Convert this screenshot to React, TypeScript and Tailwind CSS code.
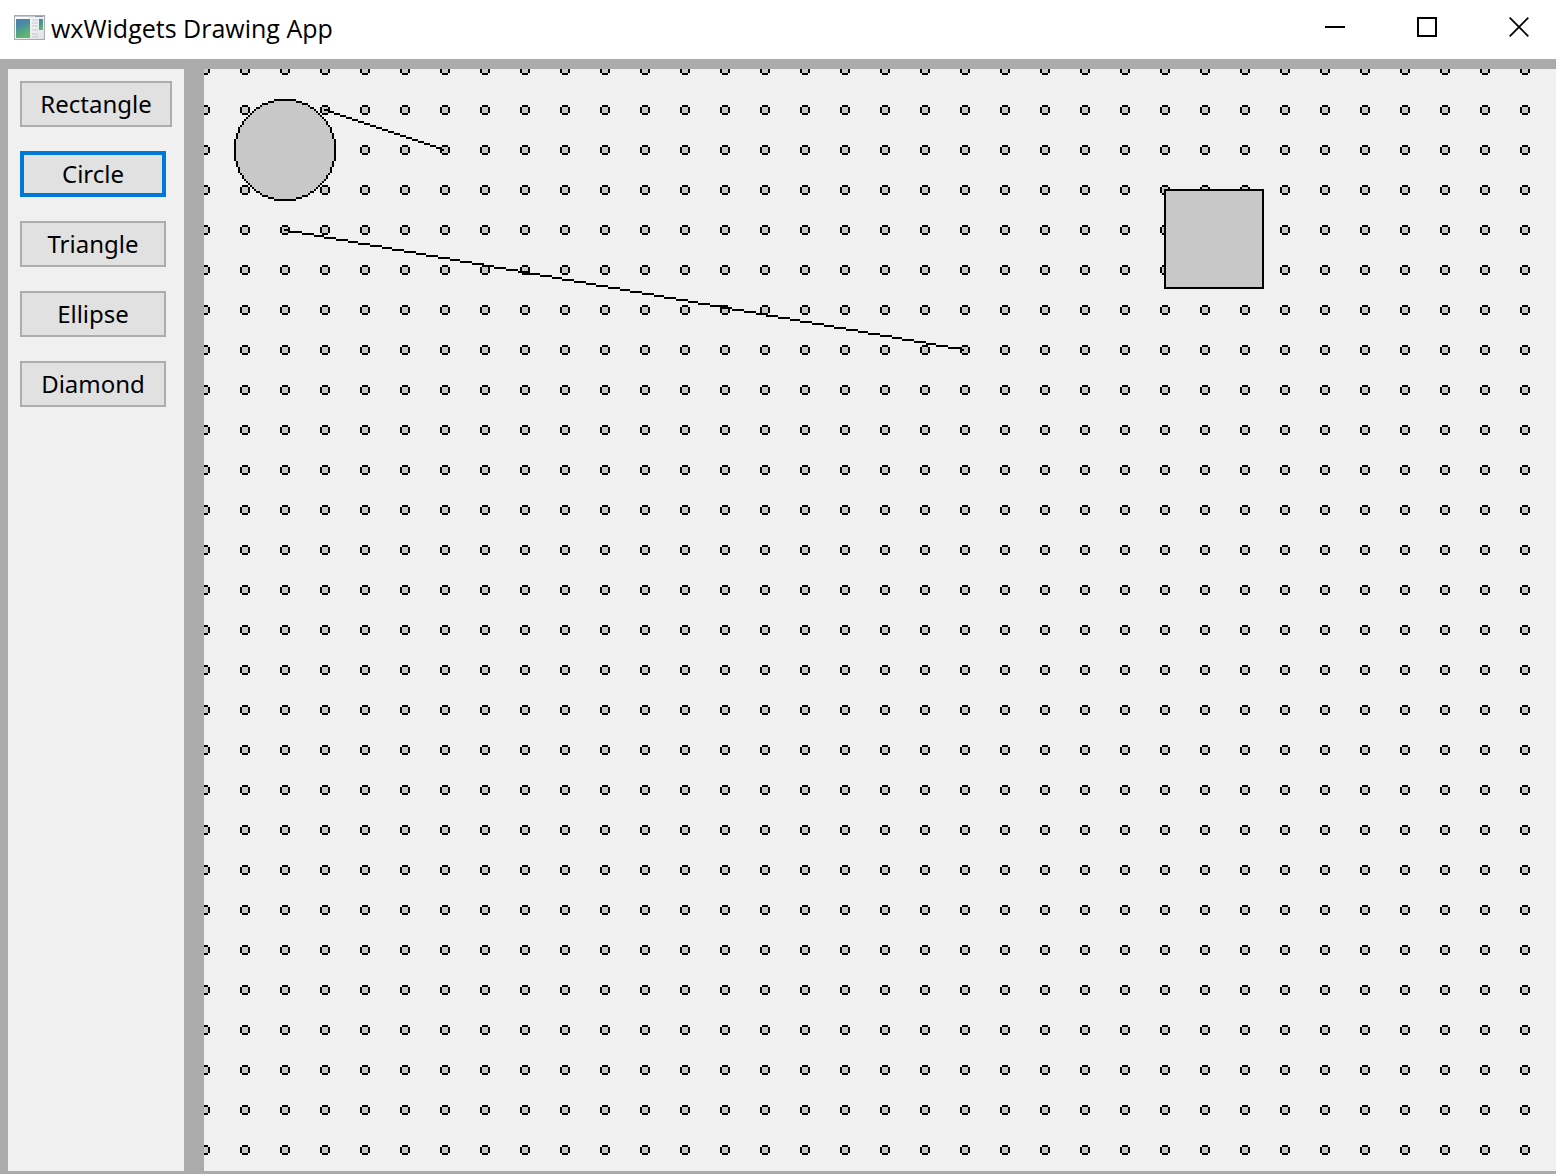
import { useState } from "react";

type Cell = [number, number];

const SHAPES = ["Rectangle", "Circle", "Triangle", "Ellipse", "Diamond"];
const WIDE_SHAPE = "Rectangle";

// One drawing unit is a cell of two screen pixels.
const toPath = (cells: Cell[]) => cells.map(([x, y]) => `M${x} ${y}h1v1h-1z`).join("");

function linePath(x0: number, y0: number, x1: number, y1: number) {
  const cells: Cell[] = [];
  for (let x = x0; x < x1; x++) {
    cells.push([x, Math.round(y0 + ((x - x0) * (y1 - y0)) / (x1 - x0))]);
  }
  return toPath(cells);
}

function circlePaths(cx: number, cy: number, r: number) {
  const outline: Cell[] = [];
  let fill = "";
  const reach = (r + 0.1) * (r + 0.1);
  for (let d = -r; d <= r; d++) {
    const e = Math.round(Math.sqrt(reach - d * d));
    fill += `M${cx - e} ${cy + d}h${2 * e + 1}v1h${-2 * e - 1}z`;
    if (e >= Math.abs(d)) {
      outline.push([cx + d, cy - e], [cx + d, cy + e], [cx - e, cy + d], [cx + e, cy + d]);
    }
  }
  return { fill, outline: toPath(outline) };
}

function AppIcon() {
  return (
    <svg className="h-[26px] w-8 shrink-0" viewBox="0 0 32 26" aria-hidden="true">
      <defs>
        <linearGradient id="pane" x1="0" y1="0" x2="0.4" y2="1">
          <stop offset="0" stopColor="#4b7fb0" />
          <stop offset="0.5" stopColor="#4a9796" />
          <stop offset="1" stopColor="#62b56c" />
        </linearGradient>
        <linearGradient id="frame" x1="0" y1="0" x2="1" y2="1">
          <stop offset="0" stopColor="#ffffff" />
          <stop offset="1" stopColor="#dfe2e4" />
        </linearGradient>
      </defs>
      <rect x="0.5" y="0.5" width="30" height="24" fill="url(#frame)" stroke="#a4acb1" />
      <path d="M1 1h29v1H1z" fill="#c3cbd1" />
      <path d="M21 1h8v1h-8z" fill="#8c979f" />
      <rect x="2" y="4" width="14" height="19" fill="url(#pane)" />
      <path d="M2 13q6-4 14-4V4H2z" fill="#4b7fb0" opacity="0.45" />
      <path
        d="M18 5h6M18 8h6M18 11h6M18 15h6M18 19h6M18 22h6"
        stroke="#c4c9cc"
      />
      <rect x="25" y="4" width="4" height="11" fill="url(#pane)" />
    </svg>
  );
}

function TitleBar() {
  const control = "flex h-[54px] w-[74px] items-center justify-center";
  return (
    <header className="flex h-[59px] shrink-0 items-start justify-between bg-white">
      <div className="flex h-14 items-center gap-[5px] pl-3.5">
        <AppIcon />
        <h1 className="font-['Open_Sans','Noto_Sans',sans-serif] text-[25px] leading-8 text-black">
          wxWidgets Drawing App
        </h1>
      </div>
      <div className="flex gap-[18px]">
        <button className={control} aria-label="Minimize">
          <svg className="h-5 w-5" viewBox="0 0 20 20">
            <path d="M0 9h20v2H0z" />
          </svg>
        </button>
        <button className={control} aria-label="Maximize">
          <svg className="h-5 w-5" viewBox="0 0 20 20">
            <rect x="1" y="1" width="18" height="18" fill="none" stroke="black" strokeWidth="2" />
          </svg>
        </button>
        <button className={control} aria-label="Close">
          <svg className="h-5 w-5" viewBox="0 0 20 20">
            <path d="M0.700 0.700L19.300 19.300M19.300 0.700L0.700 19.300" stroke="black" strokeWidth="1.800" />
          </svg>
        </button>
      </div>
    </header>
  );
}

function Canvas() {
  const circle = circlePaths(40, 40, 25);
  return (
    <main className="relative min-w-0 flex-1 bg-[#f0f0f0]">
      <svg
        className="absolute inset-0 h-full w-full"
        shapeRendering="crispEdges"
        role="img"
        aria-label="Drawing canvas"
      >
        <defs>
          <pattern id="dots" x="-20" y="-20" width="40" height="40" patternUnits="userSpaceOnUse">
            <path d="M18 16h6v10h-6zM16 18h10v6H16z" fill="black" />
            <path d="M18 18h6v6h-6z" fill="#c8c8c8" />
          </pattern>
        </defs>
        <rect width="100%" height="100%" fill="url(#dots)" />
        <g transform="scale(2)">
          <path d={circle.fill} fill="#c8c8c8" />
          <path d={circle.outline} />
          <rect x="480.500" y="60.500" width="49" height="49" fill="#c8c8c8" stroke="black" />
          <path d={linePath(60, 20, 120, 40)} />
          <path d={linePath(40, 80, 380, 140)} />
        </g>
      </svg>
    </main>
  );
}

export default function App() {
  const [selected, setSelected] = useState("Circle");
  return (
    <div className="flex min-h-screen flex-col bg-[#ababab] font-['Noto_Sans','Open_Sans',sans-serif]">
      <TitleBar />
      <div className="flex flex-1 gap-5 pt-2.5 pb-[3px] pl-2">
        <nav className="flex w-44 shrink-0 flex-col items-start gap-6 bg-[#f0f0f0] p-3">
          {SHAPES.map((shape) => (
            <button
              key={shape}
              onClick={() => setSelected(shape)}
              className={`flex h-[46px] items-center justify-center bg-[#e1e1e1] text-2xl text-black ${
                shape === WIDE_SHAPE ? "w-[152px]" : "w-[146px]"
              } ${shape === selected ? "border-4 border-[#0078d7]" : "border-2 border-[#adadad]"}`}
            >
              {shape}
            </button>
          ))}
        </nav>
        <Canvas />
      </div>
    </div>
  );
}
